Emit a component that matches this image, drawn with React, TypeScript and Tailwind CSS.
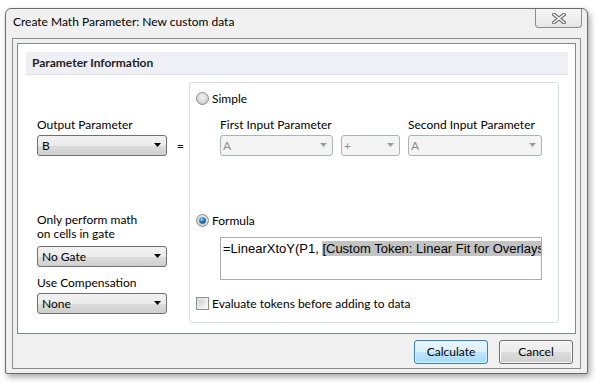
import React from 'react';

const UI_FONT = "font-['Lato','Noto_Sans',sans-serif]";

function Arrow({ disabled }: { disabled?: boolean }) {
  return (
    <svg width="8" height="5" viewBox="0 0 8 5" className="shrink-0">
      <path d="M0 0 H7 L3.5 4 Z" fill={disabled ? '#9c9c9c' : '#000'} />
    </svg>
  );
}

function Select({ value, className }: { value: string; className?: string }) {
  return (
    <div
      className={`h-[21px] w-[130px] flex items-center justify-between pl-[4px] pr-[4px] border border-[#707070] rounded-[3px] bg-[linear-gradient(to_bottom,#f2f2f2_0%,#ebebeb_50%,#dddddd_51%,#cfcfcf_100%)] text-[12px] text-black ${className ?? ''}`}
    >
      <span>{value}</span>
      <Arrow />
    </div>
  );
}

function DisabledSelect({ value, width }: { value: string; width: string }) {
  return (
    <div
      className={`h-[21px] ${width} flex items-center justify-between pl-[2px] pr-[4px] border border-[#adb2b5] rounded-[3px] bg-[#f4f4f4] text-[12px] text-[#8d8d8d]`}
    >
      <span>{value}</span>
      <Arrow disabled />
    </div>
  );
}

function Radio({ checked }: { checked?: boolean }) {
  return (
    <svg width="13" height="13" viewBox="0 0 13 13" className="shrink-0">
      <defs>
        <radialGradient id="rbg" cx="50%" cy="40%" r="60%">
          <stop offset="0%" stopColor="#f5f5f5" />
          <stop offset="100%" stopColor="#c8c8c8" />
        </radialGradient>
        <radialGradient id="rdot" cx="40%" cy="35%" r="65%">
          <stop offset="0%" stopColor="#9ee0ff" />
          <stop offset="45%" stopColor="#2a8cd6" />
          <stop offset="100%" stopColor="#0e3f7a" />
        </radialGradient>
      </defs>
      <circle cx="6.5" cy="6.5" r="6" fill="url(#rbg)" stroke="#8e8f8f" strokeWidth="1" />
      {checked && <circle cx="6.5" cy="6.5" r="3.3" fill="url(#rdot)" />}
    </svg>
  );
}

export default function App() {
  return (
    <div className={`w-[596px] h-[382px] bg-white pt-[8px] pl-[5px] ${UI_FONT}`}>
      {/* window */}
      <div className="w-[583px] h-[366px] flex flex-col border border-[#6a6a6a] rounded-t-[6px] rounded-b-[2px] bg-[#f0f0f0] shadow-[2px_3px_6px_rgba(0,0,0,0.35)]">
        {/* title bar */}
        <div className="h-[28px] flex items-start justify-between">
          <div className="pl-[7px] pt-[5px] text-[12px] leading-[16px] text-black">Create Math Parameter: New custom data</div>
          <div className="mr-[5px] w-[47px] h-[19px] flex items-center justify-center border-x border-b border-[#8c8c8c] rounded-b-[4px] bg-[linear-gradient(to_bottom,#f6f6f6,#e6e6e6)]">
            <svg width="14" height="11" viewBox="0 0 14 11">
              <path d="M2 1.5 L12 9.5 M12 1.5 L2 9.5" stroke="#6a6a6a" strokeWidth="3.6" strokeLinecap="square" />
              <path d="M2 1.5 L12 9.5 M12 1.5 L2 9.5" stroke="#ffffff" strokeWidth="1.6" strokeLinecap="square" />
            </svg>
          </div>
        </div>

        {/* client */}
        <div className="mx-[6px] mt-[1px] h-[331px] border border-[#8b8b8b] p-[4px] flex flex-col">
          {/* main panel */}
          <div className="h-[291px] border border-[#828790] bg-white p-[8px] pr-[7px]">
            <div className="h-[23px] flex items-center pl-[6px] bg-[#eef0f5] border-b border-[#dde1e7] text-[12px] font-bold text-[#1e1e1e]">
              Parameter Information
            </div>

            <div className="flex mt-[7px]">
              {/* left column */}
              <div className="w-[163px] pl-[11px] flex flex-col text-[12px] leading-[15px] text-black">
                <div className="mt-[35px]">Output Parameter</div>
                <div className="mt-[3px] flex items-center">
                  <Select value="B" />
                  <span className="ml-[10px]">=</span>
                </div>
                <div className="mt-[57px] leading-[14px]">
                  Only perform math
                  <br />
                  on cells in gate
                </div>
                <div className="mt-[5px]">
                  <Select value="No Gate" />
                </div>
                <div className="mt-[8px]">Use Compensation</div>
                <div className="mt-[3px]">
                  <Select value="None" />
                </div>
              </div>

              {/* group box */}
              <div className="w-[370px] h-[241px] border border-[#d5dde3] rounded-[3px] text-[12px] leading-[15px] text-black">
                <div className="mt-[8px] pl-[6px] flex items-center gap-[3px]">
                  <Radio />
                  <span>Simple</span>
                </div>
                <div className="pl-[30px]">
                  <div className="mt-[11px] flex">
                    <span className="w-[188px]">First Input Parameter</span>
                    <span>Second Input Parameter</span>
                  </div>
                  <div className="mt-[3px] flex gap-[8px]">
                    <DisabledSelect value="A" width="w-[113px]" />
                    <DisabledSelect value="+" width="w-[59px]" />
                    <DisabledSelect value="A" width="w-[134px]" />
                  </div>
                </div>
                <div className="mt-[57px] pl-[6px] flex items-center gap-[3px]">
                  <Radio checked />
                  <span>Formula</span>
                </div>
                <div className="pl-[30px] mt-[9px]">
                  <div className="w-[322px] h-[43px] border border-[#abadb3] pl-[2px] pt-[3px] overflow-hidden whitespace-nowrap font-['Liberation_Sans',Arial,sans-serif] text-[13px] leading-[15px] text-black">
                    =LinearXtoY(P1, <span className="bg-[#c3c3c3]">[Custom Token: Linear Fit for Overlays</span>
                  </div>
                </div>
                <div className="mt-[16px] pl-[6px] flex items-center gap-[3px]">
                  <div className="w-[13px] h-[13px] border border-[#8e8f8f] bg-[linear-gradient(135deg,#dcdcdc,#fbfbfb)] p-[2px]">
                    <div className="w-full h-full bg-[linear-gradient(135deg,#cbcfd5,#f6f6f6)]" />
                  </div>
                  <span>Evaluate tokens before adding to data</span>
                </div>
              </div>
            </div>
          </div>

          {/* buttons */}
          <div className="flex justify-end gap-[11px] mt-[6px] pr-[3px] text-[12px]">
            <div className="w-[74px] h-[24px] flex items-center justify-center border border-[#3c7fb1] rounded-[3px] bg-[linear-gradient(to_bottom,#eaf6fd_0%,#d9f0fc_50%,#bee6fd_51%,#a7d9f5_100%)] shadow-[inset_0_0_0_1px_#d6f0fc] text-black">
              Calculate
            </div>
            <div className="w-[74px] h-[24px] flex items-center justify-center border border-[#707070] rounded-[3px] bg-[linear-gradient(to_bottom,#f2f2f2_0%,#ebebeb_50%,#dddddd_51%,#cfcfcf_100%)] shadow-[inset_0_0_0_1px_#fbfbfb] text-black">
              Cancel
            </div>
          </div>
        </div>
      </div>
    </div>
  );
}
